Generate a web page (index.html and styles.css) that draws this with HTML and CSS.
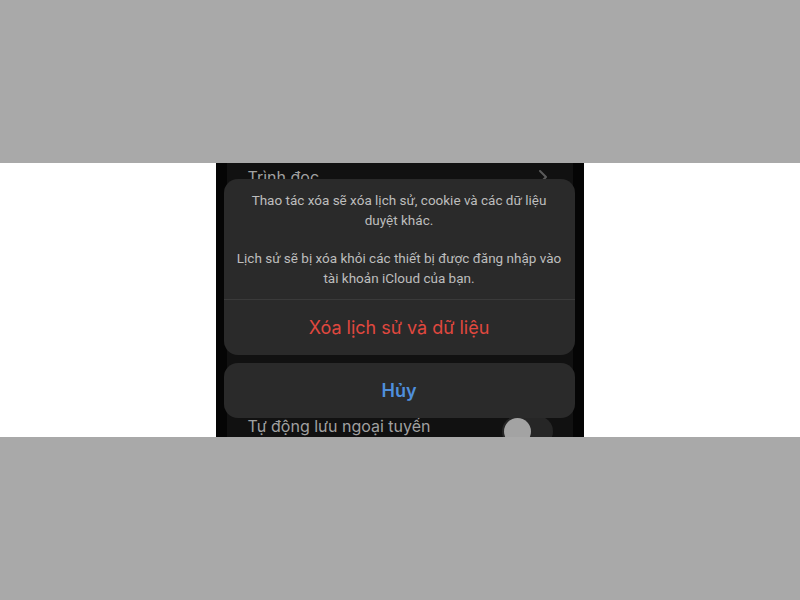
FILE: index.html
```html
<!DOCTYPE html>
<html lang="vi">
<head>
<meta charset="utf-8">
<title>Xóa lịch sử</title>
<link rel="stylesheet" href="styles.css">
</head>
<body>
<div class="band">
  <div class="phone">
    <div class="group">
      <div class="row row-top">
        <span class="label">Trình đọc</span>
        <svg class="chev" width="8" height="14" viewBox="0 0 8 14"><path d="M1 1l6 6-6 6" fill="none" stroke="#5a5a5a" stroke-width="2" stroke-linecap="round" stroke-linejoin="round"/></svg>
      </div>
      <div class="spacer"></div>
      <div class="row row-bottom">
        <span class="label">Tự động lưu ngoại tuyến</span>
        <span class="toggle"><span class="knob"></span></span>
      </div>
    </div>
    <div class="sheet">
      <div class="card">
        <div class="message">
          <p>Thao tác xóa sẽ xóa lịch sử, cookie và các dữ liệu<br>duyệt khác.</p>
          <p>Lịch sử sẽ bị xóa khỏi các thiết bị được đăng nhập vào<br>tài khoản iCloud của bạn.</p>
        </div>
        <div class="action destructive">Xóa lịch sử và dữ liệu</div>
      </div>
      <div class="card cancel">Hủy</div>
    </div>
  </div>
</div>
</body>
</html>
```
FILE: styles.css
```css
html, body {
  margin: 0;
  padding: 0;
  background: #a9a9a9;
  font-family: Inter, "Noto Sans", "DejaVu Sans", sans-serif;
}
.band {
  margin-top: 163px;
  height: 274px;
  background: #ffffff;
  display: flex;
  justify-content: center;
}
.phone {
  width: 368px;
  margin-left: -1px;
  background: #050505;
  position: relative;
  overflow: hidden;
}
.group {
  margin: 0 11px;
  height: 100%;
  background: #111111;
  display: flex;
  flex-direction: column;
}
.row {
  display: flex;
  align-items: center;
  justify-content: space-between;
  padding: 0 22px 0 21px;
  height: 44px;
}
.row-top {
  margin-top: -8px;
}
.spacer {
  flex: 1;
}
.row-bottom {
  margin-bottom: -11px;
}
.label {
  color: #a0a0a0;
  font-size: 16px;
}
.chev {
  margin-right: 4px;
}
.toggle {
  width: 51px;
  height: 31px;
  border-radius: 16px;
  background: #262626;
  position: relative;
  margin-right: -2px;
  margin-top: 10px;
}
.knob {
  position: absolute;
  left: 2px;
  top: 2px;
  width: 27px;
  height: 27px;
  border-radius: 50%;
  background: #a3a3a3;
}
.sheet {
  position: absolute;
  left: 8px;
  right: 9px;
  top: 16px;
  display: flex;
  flex-direction: column;
  gap: 8px;
}
.card {
  background: #2a2a2a;
  border-radius: 14px;
  overflow: hidden;
}
.message {
  padding: 12px 4px 11px;
  text-align: center;
  color: #bdbdbd;
  font-family: Roboto, Inter, sans-serif;
  font-size: 13.5px;
  line-height: 19.5px;
  white-space: nowrap;
  border-bottom: 1px solid #3a3a3a;
}
.message p {
  margin: 0;
}
.message p + p {
  margin-top: 19px;
}
.action {
  height: 55px;
  display: flex;
  align-items: center;
  justify-content: center;
  font-size: 18px;
}
.destructive {
  color: #e0483f;
}
.cancel {
  height: 55px;
  display: flex;
  align-items: center;
  justify-content: center;
  font-size: 18px;
  font-weight: 600;
  color: #4f8fdc;
}
```
